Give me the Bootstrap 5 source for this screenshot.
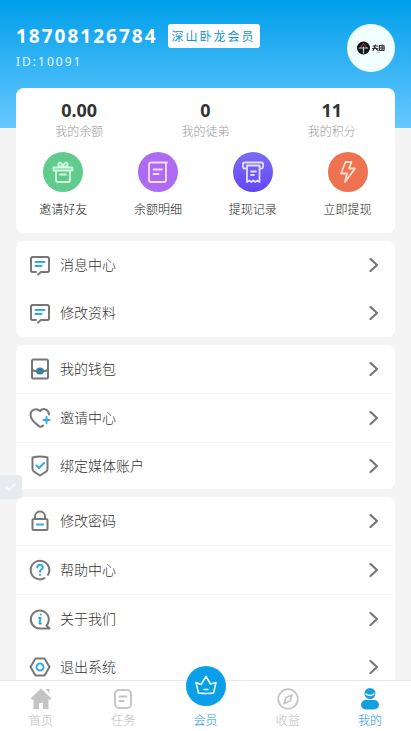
<!DOCTYPE html>
<html lang="zh-CN">
<head>
<meta charset="utf-8">
<meta name="viewport" content="width=device-width, initial-scale=1">
<title>我的</title>
<link href="https://cdn.jsdelivr.net/npm/bootstrap@5.3.0/dist/css/bootstrap.min.css" rel="stylesheet">
<style>
body { font-family: "Noto Sans", "Noto Sans CJK SC", sans-serif; font-size: 14px; line-height: 20px; color: #333; background: #f4f4f4; font-weight: 300; }
a { color: inherit; text-decoration: none; }
svg { display: block; fill: none; stroke-linecap: round; stroke-linejoin: round; }
.scroller { scrollbar-width: none; }
.scroller::-webkit-scrollbar { display: none; }
.hero { height: 128px; padding-top: 24px; background: linear-gradient(#009fea, #67c8ff); color: #fff; letter-spacing: 2px; }
.identity { gap: 10px; }
.phone { font-size: 19px; line-height: 24px; font-weight: 700; }
.level { font-size: 12px; line-height: 16px; padding: 5px 4px 3px; color: #1592d3; background: #fff; border-radius: 3px; font-weight: 400; }
.uid { font-size: 12px; line-height: 16px; margin-top: 6px; color: #e9fbff; font-weight: 400; }
.avatar { width: 48px; height: 48px; background: #f2ffff; }
.panel { background: #fff; border-radius: 8px; overflow: hidden; margin-bottom: 8px; }
.summary { margin-top: -40px; padding: 11px 0; position: relative; }
.figure-value { font-size: 18px; line-height: 22px; font-weight: 700; }
.figure-name { font-size: 12px; line-height: 16px; margin-top: 3px; color: #999; }
.quick { font-size: 12px; line-height: 16px; color: #222; }
.disc { width: 40px; height: 40px; margin-bottom: 10px; }
.green { background: #60cb8d; } .purple { background: #ad6bf3; } .indigo { background: linear-gradient(#7d6cf3, #6446f5); } .orange { background: #ee7150; }
.line-item { height: 48px; padding: 0 16px 0 12px; color: #333; }
.ruled .line-item:not(:last-child) { height: 49px; border-bottom: 1px solid #f6f6f6; }
.ruled .line-item.plain { height: 48px; border-bottom: 0; }
.short .line-item:last-child { height: 46px; }
.g { stroke: #777; stroke-width: 2; } .b { stroke: #2eabe2; stroke-width: 2; }
.tabbar { height: 51px; border-top: 1px solid #e8e8e8; background: #fff; font-size: 12px; line-height: 16px; color: #bbb; position: relative; }
.tabbar a { padding-top: 6px; }
.tabbar svg { margin-bottom: 2px; }
.tabbar .lit { color: #1296db; }
.tabbar .raised { padding-top: 0; margin-top: -15px; }
.crown { width: 40px; height: 40px; background: #0c9fe8; margin-bottom: 7px; }
.side-handle { left: 0; top: 475px; width: 22px; height: 24px; border-radius: 0 4px 4px 0; background: #e7eaee; border: 0; z-index: 5; }
</style>
<script src="https://cdn.jsdelivr.net/npm/bootstrap@5.3.0/dist/js/bootstrap.bundle.min.js"></script>
</head>
<body>
<svg class="d-none" aria-hidden="true">
  <symbol id="arrow" viewBox="0 0 10 16"><path d="M1.500 2 8 8l-6.500 6" stroke="#777" stroke-width="2.200"/></symbol>
  <symbol id="note" viewBox="0 0 24 24"><path class="g" d="M8 19H4.500Q3 19 3 17.500V5.500Q3 4 4.500 4h15Q21 4 21 5.500v12Q21 19 19.500 19H13l-3 2.500"/><path class="b" d="M7.500 9h9M7.500 13h6"/></symbol>
</svg>
<div class="vh-100 d-flex flex-column">
  <main class="scroller flex-grow-1 overflow-auto">
    <header class="hero px-3 d-flex justify-content-between align-items-start">
      <div>
        <div class="identity d-flex align-items-center">
          <span class="phone">18708126784</span>
          <span class="level text-nowrap">深山卧龙会员</span>
        </div>
        <div class="uid">ID:10091</div>
      </div>
      <div class="avatar rounded-circle flex-shrink-0 d-flex align-items-center justify-content-center">
        <svg width="28" height="14" viewBox="0 0 28 14" role="img" aria-label="头像"><circle cx="6.500" cy="7" r="6.500" fill="#151515"/><path d="M6.500 2.500 3 7M6.500 2.500 10 7" stroke="#c33"/><path d="M2.500 7h8M6.500 6v6" stroke="#a9d6dc" stroke-width="1.200"/><path d="M16 5h5M15.500 7.500h5M18.500 4l-2.500 5.500M18.500 7l2.500 2.500M22.500 4.500h4.500v5h-4.500zM22 7h5.500M25 4v5" stroke="#333" stroke-width="1.200"/><path d="M20 11.500h3" stroke="#bbb" stroke-width=".8"/></svg>
      </div>
    </header>
    <div class="px-3">
      <section class="panel summary">
        <div class="row g-0 text-center">
          <div class="col"><div class="figure-value">0.00</div><div class="figure-name">我的余额</div></div>
          <div class="col"><div class="figure-value">0</div><div class="figure-name">我的徒弟</div></div>
          <div class="col"><div class="figure-value">11</div><div class="figure-name">我的积分</div></div>
        </div>
        <div class="row g-0 text-center mt-2 pt-1 pb-1">
          <a href="#" class="col quick d-flex flex-column align-items-center"><span class="disc green rounded-circle d-flex align-items-center justify-content-center"><svg width="24" height="24" viewBox="0 0 24 24" stroke="#d5ffe3" stroke-width="1.800"><path d="M2.500 7.500h19v3h-19zM5 10.500V20q0 2 2 2h10q2 0 2-2v-9.500M9 14.500h6M12 7.500C9 7 6.500 5.500 7.500 3.500S11.500 3 12 7.500C12.500 3 15.500 1.500 16.500 3.500S15 7 12 7.500"/></svg></span>邀请好友</a>
          <a href="#" class="col quick d-flex flex-column align-items-center"><span class="disc purple rounded-circle d-flex align-items-center justify-content-center"><svg width="24" height="24" viewBox="0 0 24 24" stroke="#f8dcff" stroke-width="1.800"><path d="M21 2.500H5q-2 0-2 2V20q0 2 2 2h13q2 0 2-2V4M7.500 9.500h8.500M7.500 14h5"/></svg></span>余额明细</a>
          <a href="#" class="col quick d-flex flex-column align-items-center"><span class="disc indigo rounded-circle d-flex align-items-center justify-content-center"><svg width="24" height="24" viewBox="0 0 24 24" stroke="#e5dfff" stroke-width="1.800"><path d="M5 8.500H3.500Q2 8.500 2 7V4Q2 2.500 3.500 2.500h17Q22 2.500 22 4v3Q22 8.500 20.500 8.500H19M6 5.500h12.500V22l-2.200-1.500-2 1.500-2-1.500-2 1.500-2-1.500L6 22zM10 11.500h5M10 15h3"/></svg></span>提现记录</a>
          <a href="#" class="col quick d-flex flex-column align-items-center"><span class="disc orange rounded-circle d-flex align-items-center justify-content-center"><svg width="24" height="24" viewBox="0 0 24 24" stroke="#ffe0cf" stroke-width="1.800"><path d="M9.500 2h6L13 8.500h6L9 22l2-8.500H5z"/></svg></span>立即提现</a>
        </div>
      </section>

      <nav class="panel" aria-label="消息与资料">
        <a href="#" class="line-item d-flex align-items-center gap-2"><svg width="24" height="24"><use href="#note"/></svg><span class="flex-grow-1">消息中心</span><svg width="10" height="16"><use href="#arrow"/></svg></a>
        <a href="#" class="line-item d-flex align-items-center gap-2"><svg width="24" height="24"><use href="#note"/></svg><span class="flex-grow-1">修改资料</span><svg width="10" height="16"><use href="#arrow"/></svg></a>
      </nav>

      <nav class="panel ruled short" aria-label="账户">
        <a href="#" class="line-item d-flex align-items-center gap-2"><svg width="24" height="24" viewBox="0 0 24 24"><rect class="g" x="4" y="2.500" width="16" height="19" rx="1.500"/><path class="g" d="M4 12.500q2 2 4.500 1.500M15.500 14q2.500.5 4.500-1.500"/><ellipse cx="12" cy="14" rx="4" ry="3.500" fill="#35819f"/></svg><span class="flex-grow-1">我的钱包</span><svg width="10" height="16"><use href="#arrow"/></svg></a>
        <a href="#" class="line-item d-flex align-items-center gap-2"><svg width="24" height="24" viewBox="0 0 24 24"><path class="g" d="M21 8.500C20.500 3 15 1.500 12 5 8.500 1.500 2.500 3.500 2.500 9c0 5 5 8.500 9 11.500q1.500 1 3.500-1"/><path class="b" d="M18.500 11v6M15.500 14h6"/></svg><span class="flex-grow-1">邀请中心</span><svg width="10" height="16"><use href="#arrow"/></svg></a>
        <a href="#" class="line-item d-flex align-items-center gap-2"><svg width="24" height="24" viewBox="0 0 24 24"><path class="g" d="M4.500 3.500Q12 1.500 19.500 3.500V15q0 2-2 3L12 21.500 6.500 18q-2-1-2-3z"/><path class="b" d="m8.500 11.500 2.500 2.500 5-5"/></svg><span class="flex-grow-1">绑定媒体账户</span><svg width="10" height="16"><use href="#arrow"/></svg></a>
      </nav>

      <nav class="panel ruled" aria-label="设置">
        <a href="#" class="line-item d-flex align-items-center gap-2"><svg width="24" height="24" viewBox="0 0 24 24"><rect class="g" x="4.500" y="10" width="15" height="11" rx="1.500"/><path class="g" d="M7 10V7.500a5 5 0 0 1 10 0V10"/><path class="b" d="M9 15.500h6" stroke-width="2.500"/></svg><span class="flex-grow-1">修改密码</span><svg width="10" height="16"><use href="#arrow"/></svg></a>
        <a href="#" class="line-item d-flex align-items-center gap-2"><svg width="24" height="24" viewBox="0 0 24 24"><path class="g" d="M16.500 20.200A9.300 9.300 0 1 1 20 16.800"/><path class="b" d="M9.300 9.500c0-3.500 5.500-3.500 5.500-.3 0 2-2.800 2.300-2.800 4.600M12 16.800v.1"/></svg><span class="flex-grow-1">帮助中心</span><svg width="10" height="16"><use href="#arrow"/></svg></a>
        <a href="#" class="line-item plain d-flex align-items-center gap-2"><svg width="24" height="24" viewBox="0 0 24 24"><path class="g" d="M21.500 21.500H12a9 9 0 1 1 6.500-3z"/><path class="b" d="M12.800 7.500v.1M11 11h1.500l-1 5.500H13"/></svg><span class="flex-grow-1">关于我们</span><svg width="10" height="16"><use href="#arrow"/></svg></a>
        <a href="#" class="line-item d-flex align-items-center gap-2"><svg width="24" height="24" viewBox="0 0 24 24"><path class="g" d="M7.500 3.500h9L21.500 12l-5 8.500h-9L2.500 12z"/><circle class="b" cx="12" cy="12" r="3.500"/></svg><span class="flex-grow-1">退出系统</span><svg width="10" height="16"><use href="#arrow"/></svg></a>
      </nav>
    </div>
  </main>

  <nav class="tabbar row g-0 flex-shrink-0" aria-label="主导航">
    <a href="#" class="col d-flex flex-column align-items-center"><svg width="24" height="24" viewBox="0 0 24 24"><path d="M12 1.500 1.500 11.500Q2 13 4.500 12.500V22h5.500v-6h4v6h5.500v-9.500q2.500.5 3-1zM17 2h3.500v4.500z" fill="#c4c4c4"/></svg>首页</a>
    <a href="#" class="col d-flex flex-column align-items-center"><svg width="24" height="24" viewBox="0 0 24 24" stroke="#c6c6c6" stroke-width="2"><rect x="4" y="3" width="16" height="18" rx="4"/><path d="M8.500 9.500h7M8.500 14h4"/></svg>任务</a>
    <a href="#" class="col lit raised d-flex flex-column align-items-center"><span class="crown rounded-circle d-flex align-items-center justify-content-center"><svg width="24" height="24" viewBox="0 0 24 24" stroke="#e4faff" stroke-width="1.600"><path d="M4.500 20 2 9.500 7 11.500 12 3.500l4.500 7.500 5.500-1.500L19.500 20q-7.500 1-15 0zM10 16.500h4"/></svg></span>会员</a>
    <a href="#" class="col d-flex flex-column align-items-center"><svg width="24" height="24" viewBox="0 0 24 24" stroke="#c6c6c6" stroke-width="1.800"><circle cx="12" cy="12" r="9.800"/><path d="m16 8-2 6-6 2.500 2-6z"/></svg>收益</a>
    <a href="#" class="col lit d-flex flex-column align-items-center" aria-current="page"><svg width="24" height="24" viewBox="0 0 24 24"><circle cx="12" cy="6.500" r="5.500" fill="#159ee0"/><path d="M8 7q4 3 8 0" stroke="#fff" stroke-width="1.500"/><rect x="3" y="13" width="18" height="9.500" rx="4.700" fill="#159ee0"/></svg>我的</a>
  </nav>
</div>
<button type="button" class="side-handle position-fixed p-0 d-flex align-items-center justify-content-center" aria-label="展开"><svg width="16" height="16" viewBox="0 0 16 16" stroke="#f5f7fa" stroke-width="2"><path d="m3 8 3 3 6-6"/></svg></button>
</body>
</html>
